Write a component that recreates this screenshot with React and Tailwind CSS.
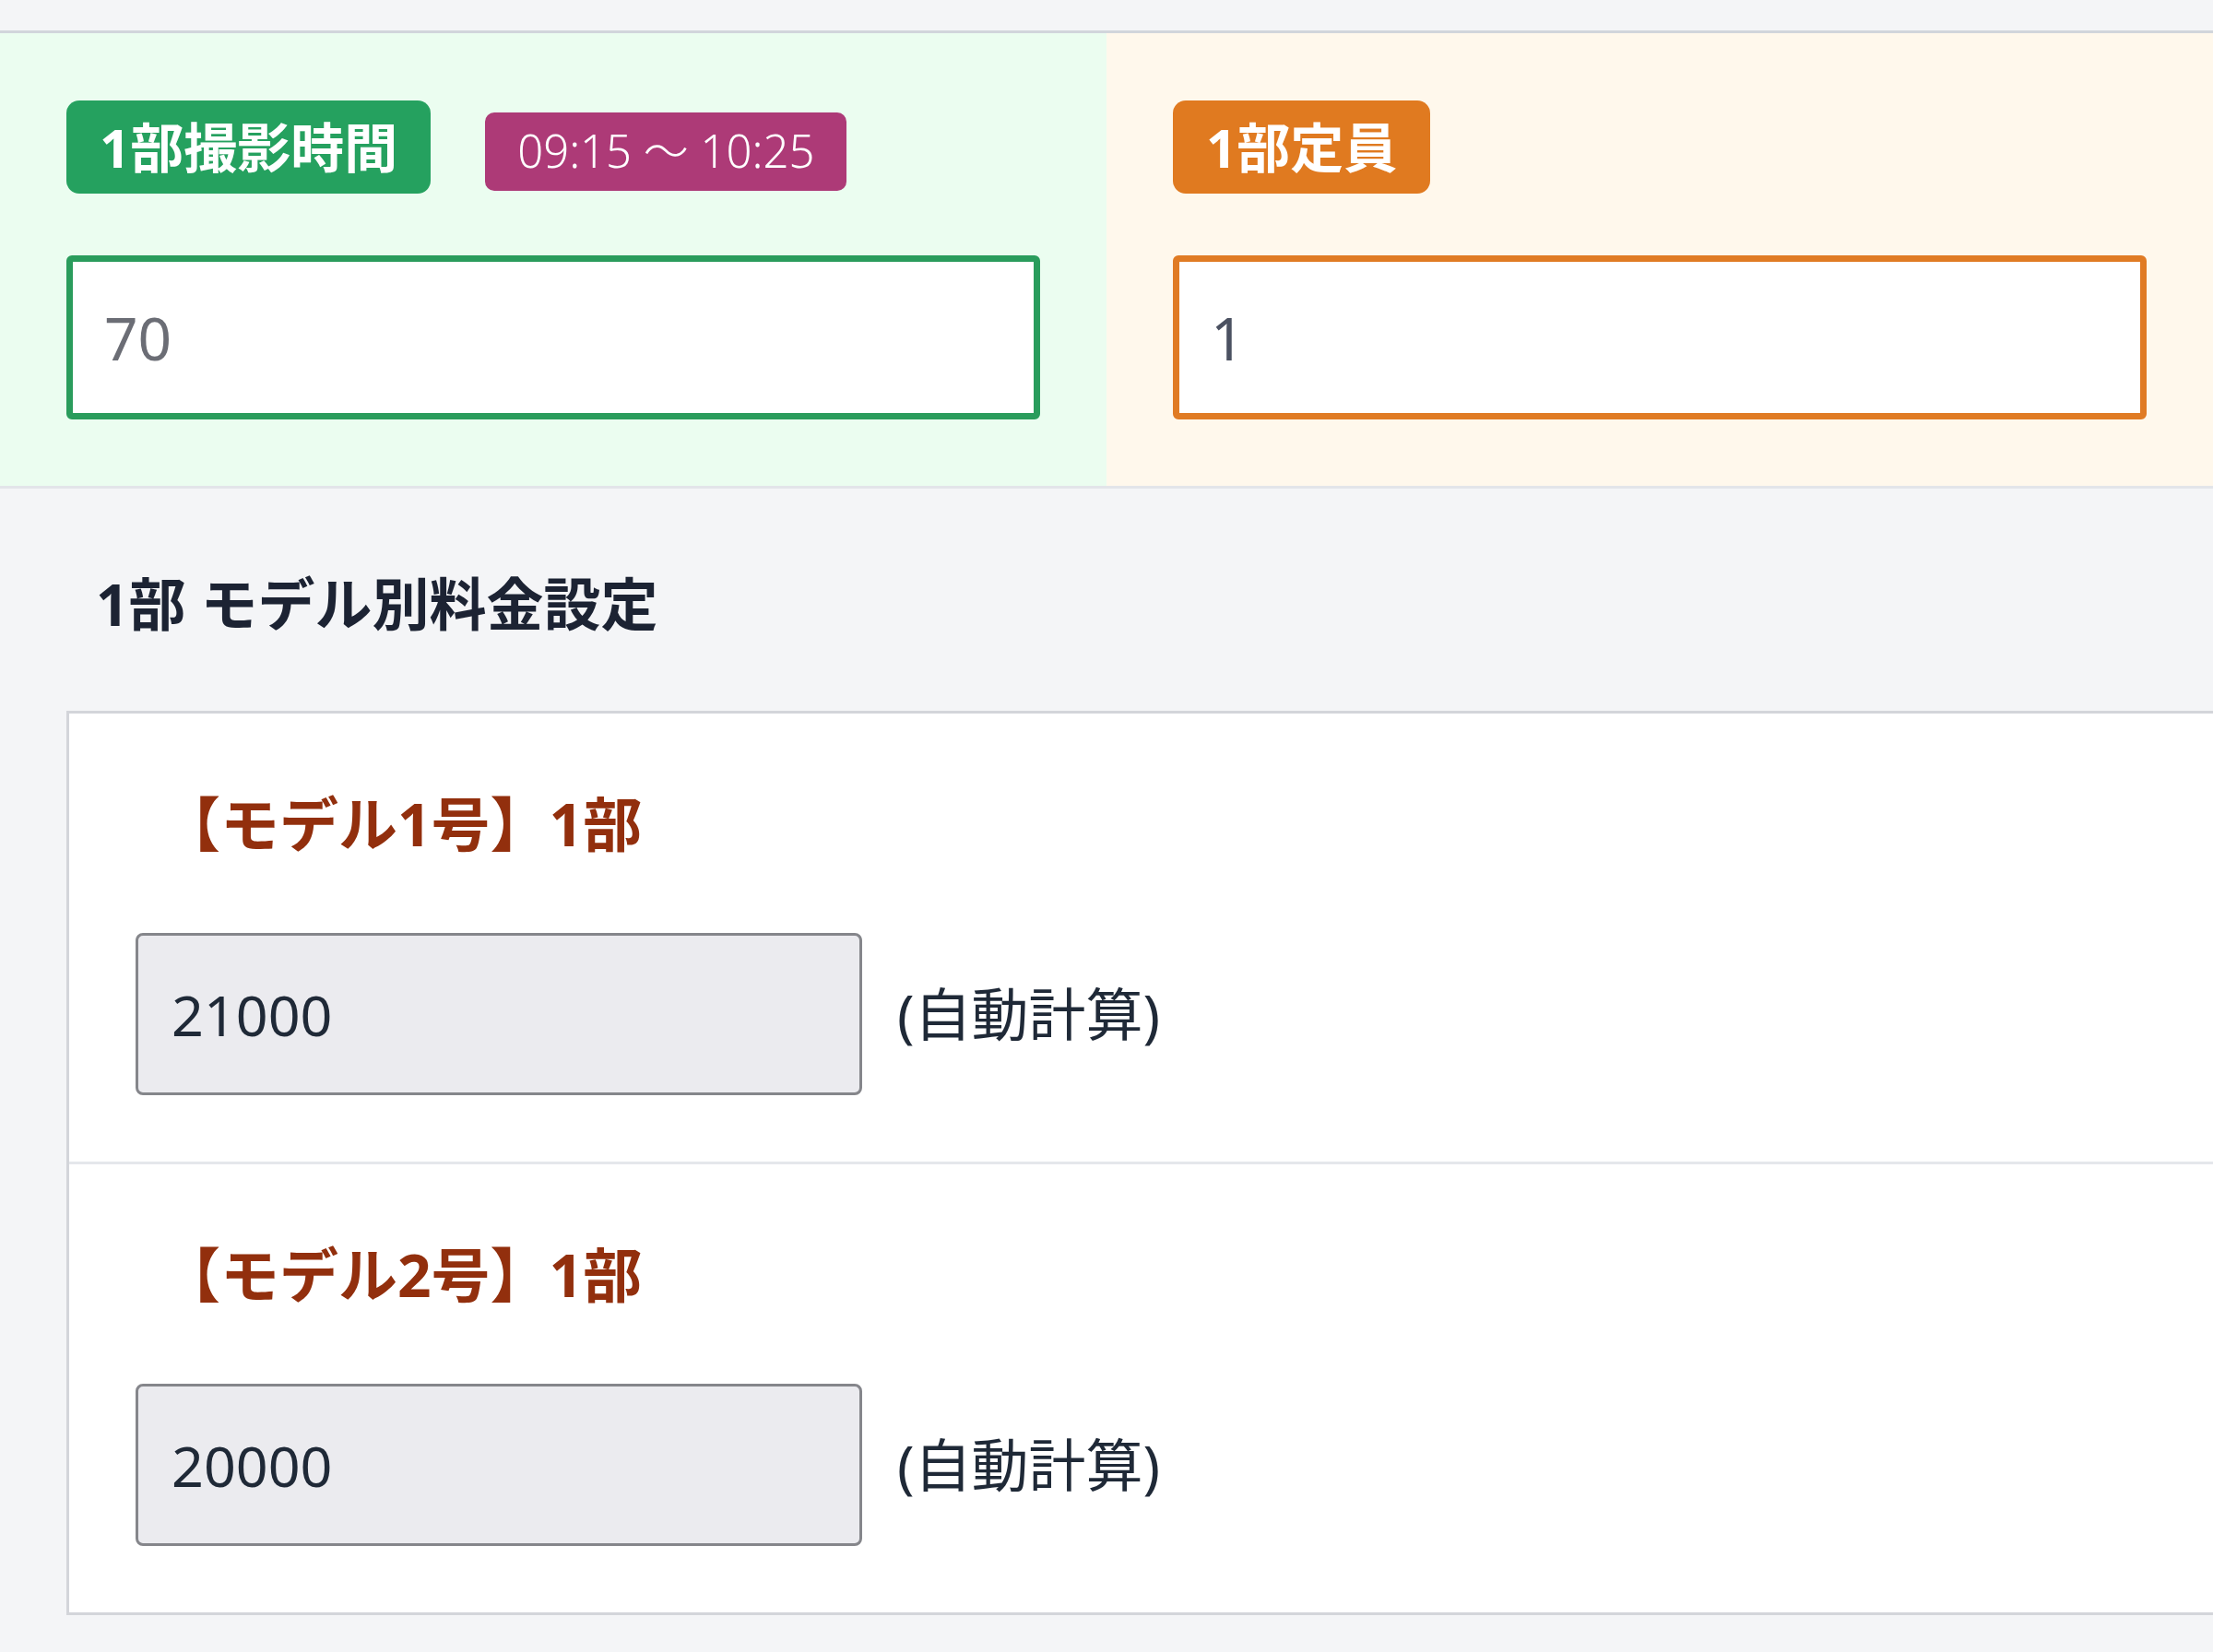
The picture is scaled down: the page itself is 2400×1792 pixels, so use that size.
import React from 'react';

const FONT = { fontFamily: '"Noto Sans", "Noto Sans CJK JP", sans-serif' };

function ModelRow({ label, value, last }) {
  return (
    <div className={`px-[72px] pt-[74px] pb-[72px] ${last ? '' : 'border-b-[3px] border-[#e5e7eb]'}`}>
      <h4 className="pl-[28px] text-[64px] leading-[92px] font-bold text-[#922f0d]">{label}</h4>
      <div className="mt-[72px] flex items-center gap-[38px]">
        <input
          type="text"
          readOnly
          value={value}
          className="w-[788px] h-[176px] bg-[#ebebef] border-[3px] border-[#85868b] rounded-[8px] px-[36px] text-[61px] text-[#1f2937] focus:outline-none"
        />
        <span className="text-[62px] text-[#1f2937]">(自動計算)</span>
      </div>
    </div>
  );
}

export default function App() {
  return (
    <div className="min-h-screen bg-[#f4f5f7] overflow-hidden" style={FONT}>
      {/* top strip */}
      <div className="h-[36px] border-b-[3px] border-[#d1d5db]" />

      {/* time / capacity panels */}
      <div className="grid grid-cols-2 border-b-[3px] border-[#e3e5e9]">
        <div className="bg-[#ebfdf0] px-[72px] pt-[73px] pb-[72px]">
          <div className="flex items-center gap-[59px]">
            <span className="h-[101px] px-[36px] flex items-center rounded-[14px] bg-[#25a15f] text-white text-[58px] font-bold">1部撮影時間</span>
            <span className="mt-[9px] h-[85px] px-[35px] flex items-center rounded-[10px] bg-[#ad3a77] text-white text-[49px] font-light">09:15 ～ 10:25</span>
          </div>
          <input
            type="text"
            readOnly
            value="70"
            className="mt-[67px] block w-full h-[178px] bg-white border-[7px] border-[#2a9c5c] rounded-[6px] px-[34px] text-[64px] text-[#6b6d75] focus:outline-none"
          />
        </div>
        <div className="bg-[#fff8ec] px-[72px] pt-[73px] pb-[72px]">
          <div className="flex items-center">
            <span className="h-[101px] px-[36px] flex items-center rounded-[14px] bg-[#e07a20] text-white text-[58px] font-bold">1部定員</span>
          </div>
          <input
            type="text"
            readOnly
            value="1"
            className="mt-[67px] block w-full h-[178px] bg-white border-[7px] border-[#e07b24] rounded-[6px] px-[34px] text-[64px] text-[#4b5161] focus:outline-none"
          />
        </div>
      </div>

      {/* model pricing */}
      <div className="pl-[72px]">
        <h2 className="pl-[32px] pt-[80px] mb-[71px] text-[62px] leading-[90px] font-bold text-[#1c2333]">1部 モデル別料金設定</h2>
        <div className="bg-white border-[3px] border-[#d3d5da] -mr-[20px]">
          <ModelRow label="【モデル1号】1部" value="21000" />
          <ModelRow label="【モデル2号】1部" value="20000" last />
        </div>
      </div>
    </div>
  );
}
